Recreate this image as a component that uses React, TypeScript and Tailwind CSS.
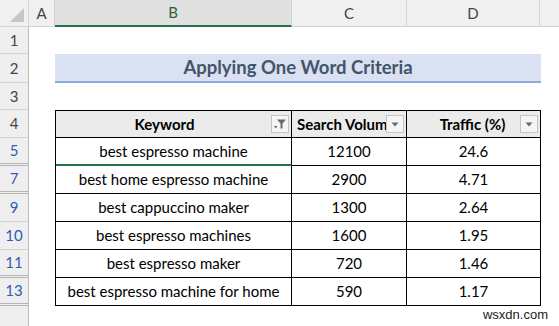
import React from "react";

const FONT = "font-['Lato','Open_Sans',sans-serif]";

function DropBtn() {
  return (
    <div className="absolute right-[2px] top-1/2 -translate-y-1/2 w-[18px] h-[18px] border border-[#c4c4c4] bg-[#f5f5f5] flex items-center justify-center">
      <svg width="8" height="5" viewBox="0 0 8 5">
        <path d="M0.5 0.5 L7.5 0.5 L4 4.5 Z" fill="#6b6b6b" />
      </svg>
    </div>
  );
}

function FilterBtn() {
  return (
    <div className="absolute right-[2px] top-1/2 -translate-y-1/2 w-[18px] h-[18px] border border-[#c4c4c4] bg-[#f5f5f5] flex items-center justify-center">
      <svg width="14" height="12" viewBox="0 0 14 12">
        <path d="M4 1.5 L13 1.5 L9.5 5.5 L9.5 10.5 L7.5 10.5 L7.5 5.5 Z" fill="#6b6b6b" />
        <path d="M1 8 L4.5 8 L2.75 10.5 Z" fill="#6b6b6b" />
      </svg>
    </div>
  );
}

const rows = [
  ["best espresso machine", "12100", "24.6"],
  ["best home espresso machine", "2900", "4.71"],
  ["best cappuccino maker", "1300", "2.64"],
  ["best espresso machines", "1600", "1.95"],
  ["best espresso maker", "720", "1.46"],
  ["best espresso machine for home", "590", "1.17"],
];

const rowHeads: { n: string; h: string; blue?: boolean; dbl?: boolean }[] = [
  { n: "1", h: "h-[27px]" },
  { n: "2", h: "h-[29px]" },
  { n: "3", h: "h-[27px]" },
  { n: "4", h: "h-[28px]" },
  { n: "5", h: "h-[28px]", blue: true, dbl: true },
  { n: "7", h: "h-[28px]", blue: true, dbl: true },
  { n: "9", h: "h-[28px]", blue: true },
  { n: "10", h: "h-[28px]", blue: true },
  { n: "11", h: "h-[28px]", blue: true, dbl: true },
  { n: "13", h: "h-[28px]", blue: true, dbl: true },
];

export default function App() {
  return (
    <div className={`w-[559px] h-[326px] overflow-hidden bg-white flex flex-col ${FONT} relative`}>
      {/* Column headers */}
      <div className="h-[27px] flex shrink-0 bg-[#f0f0f0] text-[15px] text-[#444]">
        <div className="w-[29px] h-full border-r border-b border-[#d4d4d4] relative">
          <svg className="absolute right-[4px] bottom-[4px]" width="14" height="14" viewBox="0 0 14 14">
            <path d="M14 0 L14 14 L0 14 Z" fill="#c6c6c6" />
          </svg>
        </div>
        <div className="w-[26px] h-full border-r border-b border-[#d4d4d4] flex items-center justify-center">A</div>
        <div className="w-[237px] h-full border-r border-[#d4d4d4] border-b-2 border-b-[#217346] bg-[#e0e0e0] flex items-center justify-center text-[#2f5f3f]">B</div>
        <div className="w-[115px] h-full border-r border-b border-[#d4d4d4] flex items-center justify-center">C</div>
        <div className="w-[133px] h-full border-r border-b border-[#d4d4d4] flex items-center justify-center">D</div>
        <div className="flex-1 h-full border-b border-[#d4d4d4]"></div>
      </div>

      <div className="flex flex-1 min-h-0">
        {/* Row headers */}
        <div className="w-[29px] shrink-0 bg-[#efefef] border-r border-[#bdbdbd] flex flex-col text-[15px]">
          {rowHeads.map((r) => (
            <div
              key={r.n}
              className={`${r.h} flex items-center justify-center ${
                r.dbl ? "border-b-[3px] border-double border-[#b5b5b5]" : "border-b border-[#d4d4d4]"
              } ${r.blue ? "text-[#2f5cb5]" : "text-[#444]"}`}
            >
              {r.n}
            </div>
          ))}
        </div>

        {/* Sheet */}
        <div className="flex-1 flex flex-col">
          <div className="h-[27px]"></div>
          <div className="h-[29px] flex">
            <div className="w-[26px]"></div>
            <div className="w-[486px] h-full bg-[#d9e1f2] border-b-2 border-[#8eaadb] flex items-center justify-center text-[18.5px] font-bold text-[#44546a]">
              Applying One Word Criteria
            </div>
          </div>
          <div className="h-[27px]"></div>
          <div className="flex">
            <div className="w-[26px]"></div>
            <div className="w-[486px] border-l border-t border-black text-[15px] text-black">
              <div className="flex h-[27px] bg-[#ebebeb] font-bold">
                <div className="w-[236px] relative border-r border-b border-black flex items-center justify-center pr-[18px]">
                  Keyword
                  <FilterBtn />
                </div>
                <div className="w-[115px] relative border-r border-b border-black flex items-center pl-[5px] overflow-hidden whitespace-nowrap">
                  Search Volume
                  <DropBtn />
                </div>
                <div className="w-[134px] relative border-r border-b border-black flex items-center justify-center pr-[2px]">
                  Traffic (%)
                  <DropBtn />
                </div>
              </div>
              {rows.map((r, i) => (
                <div key={i} className="flex h-[28px]">
                  <div
                    className={`w-[236px] border-r flex items-center justify-center whitespace-nowrap ${
                      i === 0 ? "border-b-2 border-b-[#217346] border-r-black" : "border-b border-black"
                    }`}
                  >
                    {r[0]}
                  </div>
                  <div className="w-[115px] border-r border-b border-black flex items-center justify-center">{r[1]}</div>
                  <div className="w-[134px] border-r border-b border-black flex items-center justify-center">{r[2]}</div>
                </div>
              ))}
            </div>
          </div>
        </div>
      </div>

      <div className="absolute right-[11px] bottom-[2px] text-[13px] font-['Liberation_Sans',Arial,sans-serif] text-[#222]">
        wsxdn.com
      </div>
    </div>
  );
}
